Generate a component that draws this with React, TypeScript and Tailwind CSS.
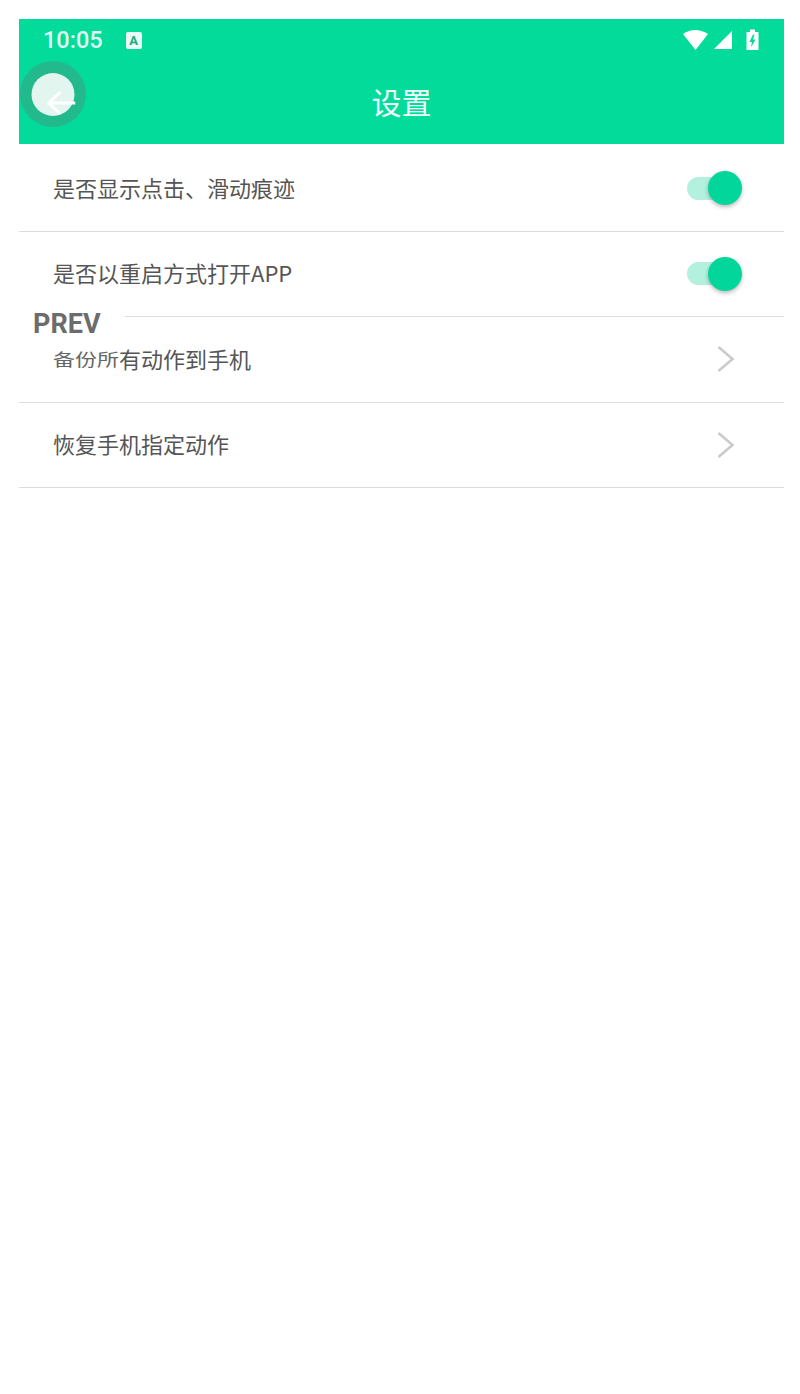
const cjk = "font-['Noto_Sans_CJK_SC','Noto_Sans',sans-serif]";

function Toggle() {
  return (
    <div className="flex items-center">
      <div className="h-[23px] w-[40px] rounded-full bg-[#b3f1de]" />
      <div className="ml-[-19px] h-[34px] w-[34px] rounded-full bg-[#03d69a] shadow-[0_2px_4px_rgba(0,0,0,0.28)]" />
    </div>
  );
}

function Row({ children, right }: { children: React.ReactNode; right: React.ReactNode }) {
  return (
    <div className="flex h-[85.5px] items-center justify-between border-b border-[#dddddd] pl-[34px] pr-[42px]">
      <div className={`${cjk} pb-[3px] text-[22px] leading-none text-[#555555]`}>{children}</div>
      {right}
    </div>
  );
}

function Arrow() {
  return (
    <svg className="mr-[7px]" width="18" height="28" viewBox="0 0 18 28" fill="none" stroke="#cbcbcb" strokeWidth="2.6">
      <path d="M1.5 2 L15.5 14 L1.5 26" />
    </svg>
  );
}

export default function App() {
  return (
    <div className="relative h-[1394px] w-[800px] bg-white pb-[16px] pl-[19px] pr-[16px] pt-[19px]">
      <div className="h-[125px] bg-[#03db9b] text-white">
        <div className="flex h-[42px] items-center justify-between px-[24px]">
          <div className="flex items-center gap-[23px]">
            <span className="pt-[2px] font-['Roboto',sans-serif] text-[23.5px] font-medium leading-none text-[#dffaf1]">10:05</span>
            <span className="flex h-[17px] w-[16px] items-center justify-center rounded-[2px] bg-[#e8fbf5] font-['Roboto',sans-serif] text-[13px] font-bold leading-none text-[#1fa883]">
              A
            </span>
          </div>
          <svg width="78" height="22" viewBox="0 0 78 22" fill="#ffffff">
            <path d="M1 5 Q13 -3 26 5 L13.5 21 Z" />
            <path d="M32 20 L50 2 V20 Z" />
            <path
              d="M64.5 3 H68 V0.5 H73 V3 H76.5 V21 H64.5 Z M71 5.5 L67.5 13 H70 L69 18.5 L73.5 10.5 H71 L72.5 5.5 Z"
              fillRule="evenodd"
            />
          </svg>
        </div>
        <div className={`${cjk} flex h-[83px] items-center justify-center pb-[4px] text-[30px] leading-none text-[#f0fdf9]`}>设置</div>
      </div>
      <div className="mt-[2px]">
        <Row right={<Toggle />}>是否显示点击、滑动痕迹</Row>
        <Row right={<Toggle />}>是否以重启方式打开APP</Row>
        <Row right={<Arrow />}>
          <span className="inline-block scale-y-75 text-[#666666]">备份所</span>有动作到手机
        </Row>
        <Row right={<Arrow />}>恢复手机指定动作</Row>
      </div>

      {/* touch marker over back arrow */}
      <div className="absolute left-[20px] top-[61px] flex h-[66px] w-[66px] items-center justify-center rounded-full bg-[#22b98d]">
        <div className="relative h-[43px] w-[43px] translate-x-[-0.5px] rounded-full bg-[#e2f5ef]">
          <svg className="absolute left-[14px] top-[15px]" width="30" height="30" viewBox="0 0 30 30" fill="none" stroke="#ffffff" strokeWidth="3">
            <path d="M15 4 L3 15 L15 26 M3 15 H30" />
          </svg>
        </div>
      </div>

      {/* PREV overlay, hides the start of the divider */}
      <div className="absolute left-[19px] top-[308px] flex h-[32px] w-[106px] items-center bg-white pl-[14px] font-['Roboto',sans-serif] text-[27px] font-bold leading-none text-[#6c6c6c]">
        PREV
      </div>
    </div>
  );
}
